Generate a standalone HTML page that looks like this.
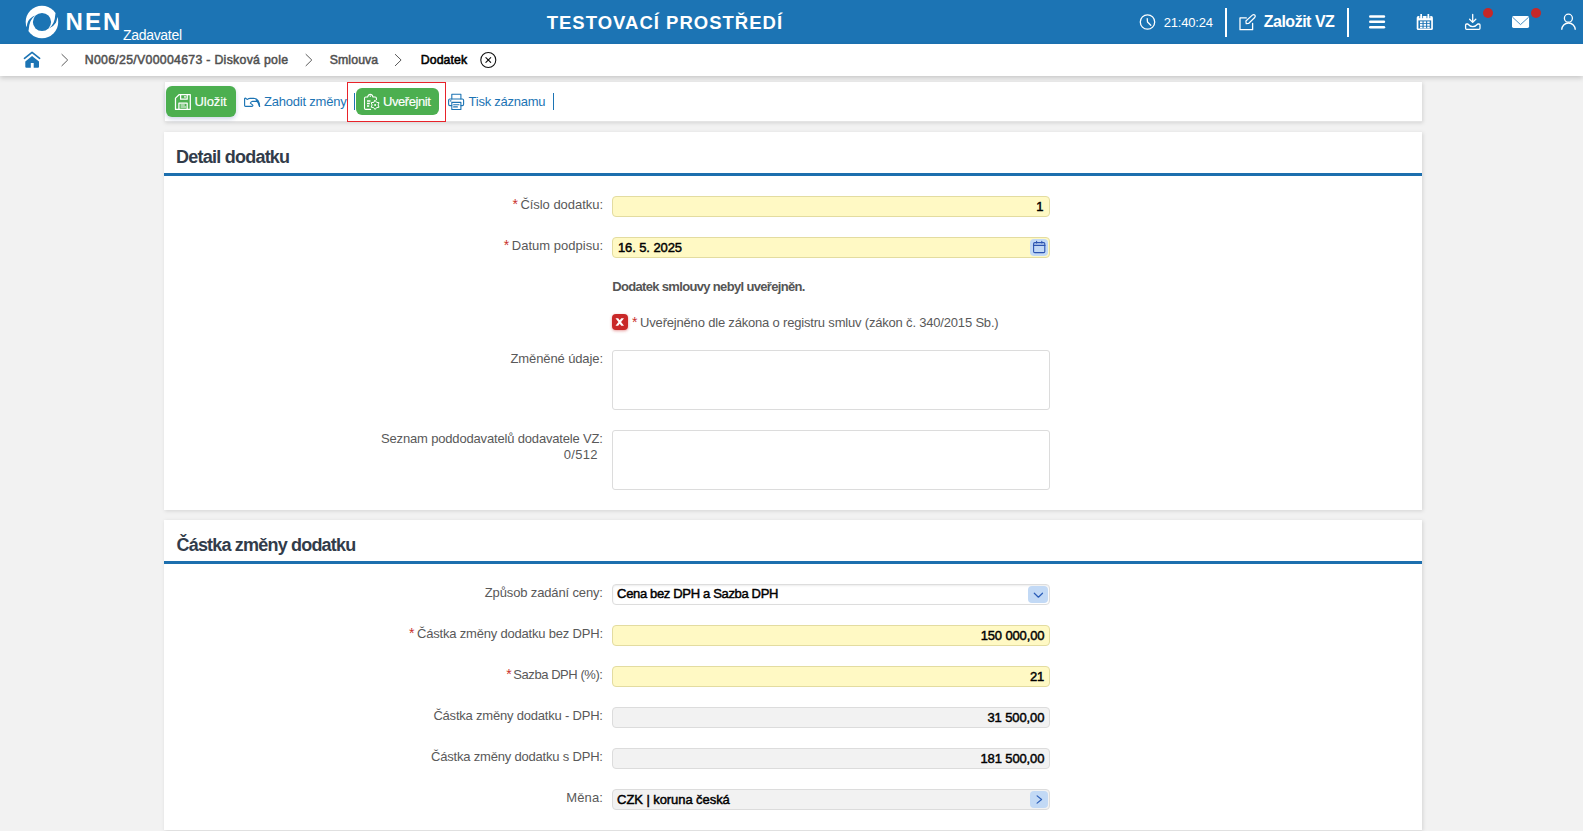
<!DOCTYPE html>
<html lang="cs">
<head>
<meta charset="utf-8">
<title>NEN - Dodatek</title>
<style>
*{box-sizing:border-box}
html,body{margin:0;padding:0}
body{width:1583px;height:831px;overflow:hidden;background:#f2f2f2;position:relative;font-family:"Liberation Sans",sans-serif}
.t{position:absolute;white-space:pre;line-height:normal;font-family:"Liberation Sans",sans-serif}
.a{position:absolute}
#hdr{left:0;top:0;width:1583px;height:44px;background:#1c74b4}
#bc{left:0;top:44px;width:1583px;height:32px;background:#fff;box-shadow:0 2px 5px rgba(0,0,0,.18)}
.panel{background:#fff;left:164px;width:1258px;box-shadow:1px 1px 4px rgba(0,0,0,.13)}
.bline{left:164px;width:1258px;height:3px;background:#1c6fae}
.inp{left:612px;width:438px;height:21px;border:1px solid #ddd;border-radius:4px;background:#fff}
.req{background:#fff9c4;border-color:#e3dca0}
.ro{background:#f2f2f2;border-color:#dcdcdc}
.ta{height:60px;border-color:#dcdcdc;border-radius:3px}
.btn{background:#4caf50;border-radius:6px;box-shadow:0 2px 4px rgba(60,90,160,.25)}
.sep{width:2px;background:#1c74b4;top:93px;height:17px}
.hsep{width:2px;background:#fff;top:8px;height:29px}
.ab{background:#c2d9f5;border-radius:4px}
.dot{width:10px;height:10px;border-radius:50%;background:#c62828;top:8px}
svg{position:absolute;overflow:visible}
</style>
</head>
<body>
<div class="a" id="hdr"></div>
<div class="a" id="bc"></div>

<!-- toolbar panel -->
<div class="a panel" style="top:82px;height:40px;border-left:1px solid #e9e9e9;border-bottom:1px solid #e4e4e4"></div>
<!-- panels -->
<div class="a panel" style="top:132px;height:378px"></div>
<div class="a bline" style="top:173px"></div>
<div class="a panel" style="top:520px;height:310px"></div>
<div class="a bline" style="top:561px"></div>

<!-- header separators & dots -->
<div class="a hsep" style="left:1225px"></div>
<div class="a hsep" style="left:1347px"></div>
<div class="a dot" style="left:1483px"></div>
<div class="a dot" style="left:1531px"></div>

<!-- toolbar buttons -->
<div class="a btn" style="left:166px;top:86px;width:70px;height:31px"></div>
<div class="a btn" style="left:356px;top:88px;width:83px;height:27px;box-shadow:none"></div>
<div class="a" style="left:347px;top:82px;width:99px;height:40px;border:1px solid #e8232a"></div>
<div class="a sep" style="left:354px;width:1px"></div>
<div class="a sep" style="left:553px;width:1px"></div>

<!-- inputs section 1 -->
<div class="a inp req" style="top:196px"></div>
<div class="a inp req" style="top:237px"></div>
<div class="a ab" style="left:1030px;top:239px;width:18px;height:17px"></div>
<div class="a inp ta" style="top:350px"></div>
<div class="a inp ta" style="top:430px"></div>
<!-- red X checkbox -->
<div class="a" style="left:612px;top:314px;width:16px;height:16px;border-radius:4px;background:#c92828;box-shadow:0 1px 3px rgba(201,40,40,.45)"></div>

<!-- inputs section 2 -->
<div class="a inp" style="top:584px;box-shadow:inset 0 1px 2px rgba(0,0,0,.08)"></div>
<div class="a ab" style="left:1028px;top:586px;width:20px;height:17px"></div>
<div class="a inp req" style="top:625px"></div>
<div class="a inp req" style="top:666px"></div>
<div class="a inp ro" style="top:707px"></div>
<div class="a inp ro" style="top:748px"></div>
<div class="a inp ro" style="top:789px"></div>
<div class="a ab" style="left:1030px;top:791px;width:18px;height:17px"></div>

<svg width="1583" height="831" viewBox="0 0 1583 831" style="left:0;top:0" fill="none" stroke-linecap="round" stroke-linejoin="round">
<!-- logo -->
<circle cx="41.95" cy="21.95" r="16.25" fill="#fff"/>
<circle cx="42" cy="22" r="9.1" fill="#1c74b4"/>
<path d="M35.2 15.6 Q30.2 17.6 28.1 21.3 Q27 24 26.9 26.2 L25.3 28 L27.6 31.6 L28.6 30.4 Q28.9 25 30.5 21.3 Q32 18 35.2 15.6 Z" fill="#1c74b4"/>
<path d="M48.8 28.5 Q53.8 26.5 55.9 22.8 Q57 20.1 57.1 17.9 L58.7 16.1 L56.4 12.5 L55.4 13.7 Q55.1 19.1 53.5 22.8 Q52 26.1 48.8 28.5 Z" fill="#1c74b4"/>
<!-- clock -->
<circle cx="1147.5" cy="22" r="7.2" stroke="#fff" stroke-width="1.3"/>
<path d="M1147.2 18.6 L1147.5 22 L1150.8 25.2" stroke="#fff" stroke-width="1.3"/>
<!-- edit -->
<path d="M1246.3 17.9 H1240 V29.7 H1252.6 V23.4" stroke="#fff" stroke-width="1.3"/>
<path d="M1246.2 23.6 L1245.9 21.0 L1252.6 14.9 Q1253.9 14.0 1254.9 15.2 Q1255.8 16.4 1254.7 17.5 L1248.6 23.5 Z" stroke="#fff" stroke-width="1.2"/>
<!-- hamburger -->
<g stroke="#fff" stroke-width="2.6"><path d="M1370.3 16.5 H1383.9"/><path d="M1370.3 21.7 H1383.9"/><path d="M1370.3 27.2 H1383.9"/></g>
<!-- calendar -->
<rect x="1416.7" y="16.1" width="16.2" height="14" rx="1.6" fill="#fff"/>
<rect x="1418.4" y="20.4" width="12.8" height="8.1" fill="#1c74b4"/>
<g fill="#fff"><rect x="1420.3" y="14" width="1.7" height="3.6"/><rect x="1427.5" y="14" width="1.7" height="3.6"/></g>
<g stroke="#1c74b4" stroke-width=".8" stroke-linecap="butt"><path d="M1419.7 15.8 V18.2 M1422.6 15.8 V18.2 M1426.9 15.8 V18.2 M1429.8 15.8 V18.2"/></g>
<g fill="#fff"><rect x="1420" y="21.4" width="2.5" height="1.8"/><rect x="1423.6" y="21.4" width="2.5" height="1.8"/><rect x="1427.2" y="21.4" width="2.5" height="1.8"/>
<rect x="1420" y="24" width="2.5" height="1.8"/><rect x="1423.6" y="24" width="2.5" height="1.8"/><rect x="1427.2" y="24" width="2.5" height="1.8"/>
<rect x="1420" y="26.6" width="2.5" height="1.6"/><rect x="1423.6" y="26.6" width="2.5" height="1.6"/><rect x="1427.2" y="26.6" width="2.5" height="1.6"/></g>
<!-- download -->
<path d="M1472.7 14.5 V22.2 M1469.6 19.3 L1472.7 22.4 L1475.8 19.3" stroke="#fff" stroke-width="1.3"/>
<path d="M1466.6 24 Q1465.6 24 1465.6 25 V28.3 Q1465.6 29.3 1466.6 29.3 H1479 Q1480 29.3 1480 28.3 V25 Q1480 24 1479 24 H1477.8 Q1475.5 26.6 1472.8 26.6 Q1470 26.6 1467.8 24 Z" stroke="#fff" stroke-width="1.3"/>
<!-- mail -->
<rect x="1512" y="16.1" width="17.1" height="11.8" rx="1.6" fill="#fff"/>
<path d="M1512.8 17.4 L1520.5 24.6 L1528.4 17.4" stroke="#1c74b4" stroke-width=".8"/>
<!-- user -->
<circle cx="1568.4" cy="18.2" r="4" stroke="#fff" stroke-width="1.3"/>
<path d="M1561.7 29.8 A6.8 6.8 0 0 1 1575.3 29.8" stroke="#fff" stroke-width="1.4" stroke-linecap="butt"/>

<!-- home -->
<path d="M24.5 58.3 L32.05 52.4 L39.6 58.3" stroke="#1c74b4" stroke-width="1.7"/>
<path d="M32.05 56.1 L25.3 61.6 V66.8 Q25.3 67.8 26.3 67.8 H30.8 V62.9 H33.7 V67.8 H38 Q39 67.8 39 66.8 V61.6 Z" fill="#1c74b4"/>
<!-- breadcrumb chevrons -->
<g stroke="#5a5a5a" stroke-width="1">
<path d="M61.9 54.4 L67.7 60 L61.9 65.7"/>
<path d="M306 54.4 L311.8 60 L306 65.7"/>
<path d="M395.3 54.4 L401.1 60 L395.3 65.7"/>
</g>
<!-- close circle -->
<circle cx="488.3" cy="60" r="7.5" stroke="#111" stroke-width="1.1"/>
<path d="M485.9 57.6 L490.7 62.4 M490.7 57.6 L485.9 62.4" stroke="#111" stroke-width="1.1"/>

<!-- save icon -->
<g stroke="#fff" stroke-width="1.25">
<path d="M175.5 109.4 V98.1 L179 94.7 H190.3 V109.4 Z"/>
<path d="M180.6 94.7 V99.2 H187.2 V94.7"/>
<path d="M185 96.2 V97.4" stroke-width="1.1"/>
<path d="M178.9 109.4 V103.2 H187.2 V109.4"/>
<path d="M181 105 H184.4 M181 107 H185.8" stroke-width="1"/>
</g>
<!-- discard icon -->
<g stroke="#1c74b4" stroke-width="1.15">
<path d="M257.2 101.3 H252.6 Q250.9 101.6 250.4 103.1 L252.8 105.1 Q253.1 106.3 251.8 106.3 H245.5 Q244.6 106.3 244.6 105.4 V98.6 Q245.3 97.7 246.1 98.7 Q247.1 99.9 248.3 98.8 Q249 98.3 250 98.3 H253.6 Q259.4 98.8 259.6 106.4"/>
<path d="M256.4 100.6 Q259 102.4 259.5 106.2" stroke-width="1.3"/>
</g>
<!-- publish icon -->
<g stroke="#fff" stroke-width="1.1">
<path d="M370.6 109.4 H365.7 Q364.5 109.4 364.5 108.2 V98.2 Q364.5 97 365.7 97 H367.6 Q368.3 94.4 370.3 94.4 Q372.3 94.4 373 97 H375.2 Q376.4 97 376.4 98.2 V99.6"/>
<path d="M370.3 95.8 V96.6" stroke-width="1"/>
<path d="M367 100.9 H370.4 M367 103.4 H369.8 M367 105.9 H369.2" stroke-width="1.5" stroke-linecap="butt"/>
<path d="M375.10 100.40 L376.60 102.35 L379.04 102.67 L378.10 104.95 L379.04 107.23 L376.60 107.55 L375.10 109.50 L373.60 107.55 L371.16 107.23 L372.10 104.95 L371.16 102.67 L373.60 102.35 Z" stroke-width="1"/>
<circle cx="375.1" cy="104.95" r="1" fill="#fff" stroke="none"/>
</g>
<!-- print icon -->
<g stroke="#1c74b4" stroke-width="1.1">
<path d="M451.8 98.9 V94.3 H460.9 V98.9"/>
<path d="M451.8 105.6 H449.9 Q448.6 105.6 448.6 104.3 V100.3 Q448.6 99 449.9 99 H462.3 Q463.6 99 463.6 100.3 V104.3 Q463.6 105.6 462.3 105.6 H460.9"/>
<path d="M451.8 102.4 H460.9 V109.5 H451.8 Z"/>
<path d="M453.6 104.7 H459 M453.6 106.9 H457.4"/>
<path d="M450.3 100.9 H450.9" stroke-width="1.3"/>
</g>

<!-- red X -->
<path d="M615.5 318.2 H618.2 L624.0 325.7 H621.3 Z M621.3 318.2 H624.0 L618.2 325.7 H615.5 Z" fill="#fff" stroke="none"/>
<!-- date calendar icon -->
<g stroke="#2c54b0" stroke-width="1.1">
<rect x="1033.6" y="242.6" width="11.2" height="10" rx="1.2"/>
<path d="M1033.6 245.4 H1044.8" stroke-width="1.4"/>
<path d="M1036.6 241.2 V243 M1041.8 241.2 V243"/>
</g>
<!-- select chevron -->
<path d="M1034.3 593.2 L1038.4 597.2 L1042.5 593.2" stroke="#2a5db8" stroke-width="1.2"/>
<!-- currency chevron -->
<path d="M1037.1 795.9 L1041.6 799.5 L1037.1 803.1" stroke="#2a5db8" stroke-width="1.2"/>
</svg>


<span class="t" style="left:65.60px;top:7.70px;font-size:24px;font-weight:700;color:#fff;letter-spacing:2.014px">NEN</span>
<span class="t" style="left:123.00px;top:26.80px;font-size:14px;font-weight:400;color:#fff;letter-spacing:-0.311px">Zadavatel</span>
<span class="t" style="left:546.70px;top:11.65px;font-size:18.5px;font-weight:700;color:#fff;letter-spacing:1.009px">TESTOVACÍ PROSTŘEDÍ</span>
<span class="t" style="left:1163.70px;top:15.20px;font-size:13px;font-weight:400;color:#fff;letter-spacing:-0.173px">21:40:24</span>
<span class="t" style="left:1263.70px;top:12.90px;font-size:16px;font-weight:700;color:#fff;letter-spacing:-0.485px">Založit VZ</span>
<span class="t" style="left:84.80px;top:52.70px;font-size:12.3px;font-weight:400;color:#505050;letter-spacing:0.295px;-webkit-text-stroke:0.5px #505050">N006/25/V00004673 - Disková pole</span>
<span class="t" style="left:329.70px;top:52.70px;font-size:12.3px;font-weight:400;color:#505050;letter-spacing:0.109px;-webkit-text-stroke:0.5px #505050">Smlouva</span>
<span class="t" style="left:420.70px;top:52.70px;font-size:12.3px;font-weight:400;color:#000;letter-spacing:0.115px;-webkit-text-stroke:0.55px #000">Dodatek</span>
<span class="t" style="left:194.50px;top:93.80px;font-size:13px;font-weight:400;color:#fff;letter-spacing:-0.063px;-webkit-text-stroke:0.15px #fff">Uložit</span>
<span class="t" style="left:264.10px;top:93.80px;font-size:13px;font-weight:400;color:#1c74b4;letter-spacing:-0.222px">Zahodit změny</span>
<span class="t" style="left:383.00px;top:93.80px;font-size:13px;font-weight:400;color:#fff;letter-spacing:-0.437px;-webkit-text-stroke:0.15px #fff">Uveřejnit</span>
<span class="t" style="left:468.60px;top:93.80px;font-size:13px;font-weight:400;color:#1c74b4;letter-spacing:-0.247px">Tisk záznamu</span>
<span class="t" style="left:176.10px;top:146.50px;font-size:18px;font-weight:700;color:#323c4a;letter-spacing:-0.770px">Detail dodatku</span>
<span class="t" style="left:176.50px;top:534.70px;font-size:18px;font-weight:700;color:#323c4a;letter-spacing:-0.809px">Částka změny dodatku</span>
<span class="t" style="left:520.40px;top:197.00px;font-size:13px;font-weight:400;color:#595959;letter-spacing:-0.039px">Číslo dodatku:</span>
<span class="t" style="left:512.50px;top:196.00px;font-size:14px;font-weight:400;color:#c9302c;letter-spacing:0.000px">*</span>
<span class="t" style="left:511.80px;top:238.00px;font-size:13px;font-weight:400;color:#595959;letter-spacing:0.011px">Datum podpisu:</span>
<span class="t" style="left:503.80px;top:237.00px;font-size:14px;font-weight:400;color:#c9302c;letter-spacing:0.000px">*</span>
<span class="t" style="left:510.50px;top:351.00px;font-size:13px;font-weight:400;color:#595959;letter-spacing:-0.112px">Změněné údaje:</span>
<span class="t" style="left:381.00px;top:431.00px;font-size:13px;font-weight:400;color:#595959;letter-spacing:-0.167px">Seznam poddodavatelů dodavatele VZ:</span>
<span class="t" style="left:563.80px;top:447.00px;font-size:13px;font-weight:400;color:#595959;letter-spacing:0.288px">0/512</span>
<span class="t" style="left:612.20px;top:279.00px;font-size:13px;font-weight:700;color:#555;letter-spacing:-0.663px">Dodatek smlouvy nebyl uveřejněn.</span>
<span class="t" style="left:632.00px;top:314.00px;font-size:14px;font-weight:400;color:#c9302c;letter-spacing:0.000px">*</span>
<span class="t" style="left:640.10px;top:315.00px;font-size:13px;font-weight:400;color:#595959;letter-spacing:-0.187px">Uveřejněno dle zákona o registru smluv (zákon č. 340/2015 Sb.)</span>
<span class="t" style="left:484.80px;top:585.00px;font-size:13px;font-weight:400;color:#595959;letter-spacing:-0.139px">Způsob zadání ceny:</span>
<span class="t" style="left:417.00px;top:626.00px;font-size:13px;font-weight:400;color:#595959;letter-spacing:-0.196px">Částka změny dodatku bez DPH:</span>
<span class="t" style="left:409.00px;top:625.00px;font-size:14px;font-weight:400;color:#c9302c;letter-spacing:0.000px">*</span>
<span class="t" style="left:513.30px;top:667.00px;font-size:13px;font-weight:400;color:#595959;letter-spacing:-0.437px">Sazba DPH (%):</span>
<span class="t" style="left:506.30px;top:666.00px;font-size:14px;font-weight:400;color:#c9302c;letter-spacing:0.000px">*</span>
<span class="t" style="left:433.40px;top:708.00px;font-size:13px;font-weight:400;color:#595959;letter-spacing:-0.202px">Částka změny dodatku - DPH:</span>
<span class="t" style="left:431.00px;top:749.00px;font-size:13px;font-weight:400;color:#595959;letter-spacing:-0.194px">Částka změny dodatku s DPH:</span>
<span class="t" style="left:566.20px;top:790.00px;font-size:13px;font-weight:400;color:#595959;letter-spacing:0.165px">Měna:</span>
<span class="t" style="left:1036.27px;top:199.00px;font-size:13px;font-weight:400;color:#000;letter-spacing:0.000px;-webkit-text-stroke:0.45px #000">1</span>
<span class="t" style="left:617.90px;top:240.00px;font-size:13px;font-weight:400;color:#000;letter-spacing:-0.086px;-webkit-text-stroke:0.45px #000">16. 5. 2025</span>
<span class="t" style="left:617.10px;top:586.00px;font-size:13px;font-weight:400;color:#000;letter-spacing:-0.339px;-webkit-text-stroke:0.45px #000">Cena bez DPH a Sazba DPH</span>
<span class="t" style="left:980.70px;top:628.00px;font-size:13px;font-weight:400;color:#000;letter-spacing:-0.142px;-webkit-text-stroke:0.45px #000">150 000,00</span>
<span class="t" style="left:1029.90px;top:669.00px;font-size:13px;font-weight:400;color:#000;letter-spacing:-0.169px;-webkit-text-stroke:0.45px #000">21</span>
<span class="t" style="left:987.40px;top:710.00px;font-size:13px;font-weight:400;color:#000;letter-spacing:-0.093px;-webkit-text-stroke:0.45px #000">31 500,00</span>
<span class="t" style="left:980.40px;top:751.00px;font-size:13px;font-weight:400;color:#000;letter-spacing:-0.109px;-webkit-text-stroke:0.45px #000">181 500,00</span>
<span class="t" style="left:617.10px;top:792.00px;font-size:13px;font-weight:400;color:#000;letter-spacing:-0.072px;-webkit-text-stroke:0.45px #000">CZK | koruna česká</span>
</body>
</html>
